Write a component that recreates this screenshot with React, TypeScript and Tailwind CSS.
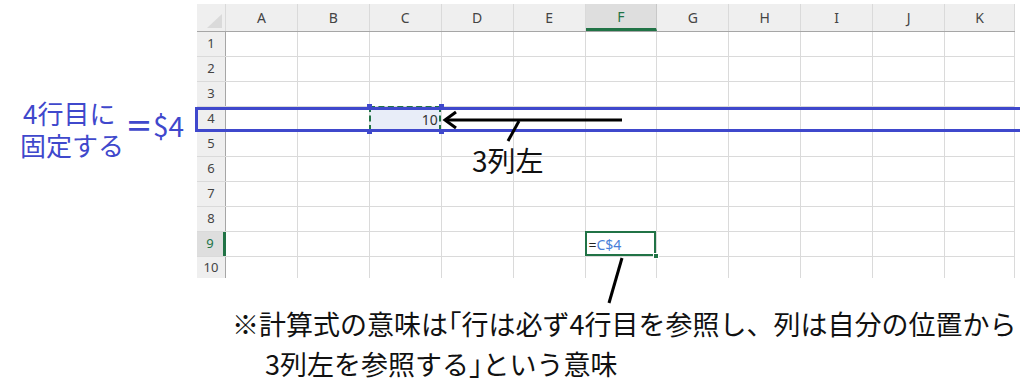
import React from "react";

const cols = [
  { l: "A", w: "w-[72px]" },
  { l: "B", w: "w-[72px]" },
  { l: "C", w: "w-[72px]" },
  { l: "D", w: "w-[72px]" },
  { l: "E", w: "w-[72px]" },
  { l: "F", w: "w-[72px]" },
  { l: "G", w: "w-[72px]" },
  { l: "H", w: "w-[72px]" },
  { l: "I", w: "w-[72px]" },
  { l: "J", w: "w-[72px]" },
  { l: "K", w: "w-[70px]" },
];

const rows = [1, 2, 3, 4, 5, 6, 7, 8, 9, 10];

const jp = { fontFamily: '"Noto Sans CJK JP", sans-serif' };

function Cell({ row, col, w }: { row: number; col: string; w: string }) {
  if (row === 4 && col === "C") {
    return (
      <div className={`${w} relative h-full flex items-center justify-end pr-[3px] border-r border-[#dadada] bg-[#e8edf8] text-[14px] text-[#333]`}>
        <div className="absolute -left-[1px] -top-[1px] right-0 bottom-0 border-2 border-dashed border-[#217346]" />
        <span className="relative">10</span>
        <div className="absolute -left-[3px] -top-[3px] w-[5px] h-[5px] bg-[#3f48cc]" />
        <div className="absolute -right-[3px] -top-[3px] w-[5px] h-[5px] bg-[#3f48cc]" />
        <div className="absolute -left-[3px] -bottom-[3px] w-[5px] h-[5px] bg-[#3f48cc]" />
        <div className="absolute -right-[3px] -bottom-[3px] w-[5px] h-[5px] bg-[#3f48cc]" />
      </div>
    );
  }
  if (row === 9 && col === "F") {
    return (
      <div className={`${w} relative h-full flex items-center pl-[3px] border-r border-[#dadada] text-[14px]`}>
        <div className="absolute -left-[1px] -top-[1px] right-0 bottom-0 border-2 border-[#217346]" />
        <span className="relative text-[#222]">=</span>
        <span className="relative text-[#4a7fd8]">C$4</span>
        <div className="absolute -right-[3px] -bottom-[3px] w-[6px] h-[6px] bg-[#217346] border border-white" />
      </div>
    );
  }
  return <div className={`${w} h-full border-r border-[#dadada]`} />;
}

export default function App() {
  return (
    <div
      className="relative w-[1020px] h-[389px] overflow-hidden bg-white"
      style={{ fontFamily: '"Noto Sans", "Noto Sans CJK JP", sans-serif' }}
    >
      {/* spreadsheet */}
      <div className="pt-[4px] pl-[197px]">
        <div className="flex flex-col w-[818px]">
          {/* header */}
          <div className="flex h-[28px] bg-[#efefef] border-b border-[#a6a6a6]">
            <div className="w-[29px] h-full flex items-end justify-end p-[3px] border-r border-[#dadada]">
              <div
                className="w-[15px] h-[14px] bg-[#dadada]"
                style={{ clipPath: "polygon(100% 0, 100% 100%, 0 100%)" }}
              />
            </div>
            {cols.map((c) =>
              c.l === "F" ? (
                <div
                  key={c.l}
                  className={`${c.w} h-full flex items-center justify-center bg-[#dedede] border-r border-[#c8c8c8] border-b-[3px] border-b-[#217346] -mb-[1px] text-[14px] text-[#217346]`}
                >
                  {c.l}
                </div>
              ) : (
                <div
                  key={c.l}
                  className={`${c.w} h-full flex items-center justify-center border-r border-[#dadada] text-[14px] text-[#444]`}
                >
                  {c.l}
                </div>
              )
            )}
          </div>
          {/* rows */}
          {rows.map((r) => (
            <div
              key={r}
              className={`flex ${r === 10 ? "h-[21px]" : "h-[25px] border-b border-[#dadada]"}`}
            >
              {r === 9 ? (
                <div className="w-[29px] h-full flex items-center justify-center bg-[#dedede] border-r-[3px] border-[#217346] text-[13px] text-[#217346]">
                  {r}
                </div>
              ) : (
                <div className="w-[29px] h-full flex items-center justify-center bg-[#efefef] border-r border-[#a6a6a6] text-[13px] text-[#444]">
                  {r}
                </div>
              )}
              {cols.map((c) => (
                <Cell key={c.l} row={r} col={c.l} w={c.w} />
              ))}
            </div>
          ))}
        </div>
      </div>

      {/* explanation text */}
      <div className="mt-[26px] text-[27px] leading-[40px] text-[#111] whitespace-nowrap" style={jp}>
        <div className="pl-[232px]">
          ※計算式の意味は<span className="[font-feature-settings:'halt']">「</span>行は必ず4行目を参照し、列は自分の位置から
        </div>
        <div className="pl-[265px]">
          3列左を参照する<span className="[font-feature-settings:'halt']">」</span>という意味
        </div>
      </div>

      {/* row 4 highlight */}
      <div className="absolute left-[195px] top-[107px] w-[840px] h-[25px] border-[3px] border-[#3f48cc]" />

      {/* left annotation */}
      <div className="absolute left-[20px] top-[97px] flex items-center gap-[1px] text-[#3f48cc] whitespace-nowrap" style={jp}>
        <div className="flex flex-col text-[26px] leading-[32px]">
          <span className="pl-[3px]">4行目に</span>
          <span>固定する</span>
        </div>
        <div className="flex items-center text-[28px] leading-[34px] -mt-[8px]">
          <span className="font-bold">＝</span>
          <span>$4</span>
        </div>
      </div>

      {/* 3列左 */}
      <div className="absolute left-[472px] top-[142px] text-[28px] leading-[36px] text-[#111] whitespace-nowrap" style={jp}>
        3列左
      </div>

      {/* lines and arrow */}
      <svg className="absolute left-0 top-0 pointer-events-none" width="1020" height="389" viewBox="0 0 1020 389">
        <line x1="447" y1="120" x2="622" y2="120" stroke="#000" strokeWidth="3" />
        <polyline points="456,112 445,120 456,128" fill="none" stroke="#000" strokeWidth="3" strokeLinejoin="miter" />
        <line x1="519" y1="121" x2="508" y2="141" stroke="#000" strokeWidth="3" />
        <line x1="622" y1="258" x2="609" y2="303" stroke="#000" strokeWidth="3" />
      </svg>
    </div>
  );
}
